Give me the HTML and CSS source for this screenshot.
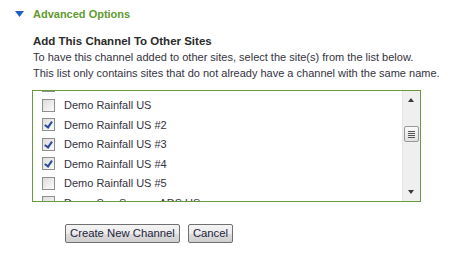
FILE: index.html
```html
<!DOCTYPE html>
<html>
<head>
<meta charset="utf-8">
<link rel="stylesheet" href="styles.css">
</head>
<body>
<div class="panel">
  <div class="toggle">
    <svg class="tri" width="9" height="6" viewBox="0 0 9 6"><path d="M0 0H9L4.5 6Z" fill="#1f5fbf"/></svg>
    <span class="toggle-label">Advanced Options</span>
  </div>
  <div class="section">
    <h3 class="title">Add This Channel To Other Sites</h3>
    <p class="desc">To have this channel added to other sites, select the site(s) from the list below.<br>This list only contains sites that do not already have a channel with the same name.</p>
    <div class="listbox">
      <div class="items">
        <div class="items-inner">
          <label class="row"><span class="cb"></span><span>Demo Previous Site</span></label>
          <label class="row"><span class="cb"></span><span>Demo Rainfall US</span></label>
          <label class="row"><span class="cb on"></span><span>Demo Rainfall US #2</span></label>
          <label class="row"><span class="cb on"></span><span>Demo Rainfall US #3</span></label>
          <label class="row"><span class="cb on"></span><span>Demo Rainfall US #4</span></label>
          <label class="row"><span class="cb"></span><span>Demo Rainfall US #5</span></label>
          <label class="row"><span class="cb"></span><span>Demo San Sewer - ADS US</span></label>
        </div>
      </div>
      <div class="sbar">
        <div class="arrow up"></div>
        <div class="track">
          <div class="thumb"><i></i><i></i><i></i><i></i></div>
        </div>
        <div class="arrow down"></div>
      </div>
    </div>
    <div class="actions">
      <button class="btn">Create New Channel</button>
      <button class="btn">Cancel</button>
    </div>
  </div>
</div>
</body>
</html>
```
FILE: styles.css
```css
html, body {
  margin: 0;
  padding: 0;
  background: #fff;
}
body {
  font-family: "Liberation Sans", Arial, sans-serif;
  font-size: 11px;
  color: #333340;
}
.panel {
  padding: 6px 0 0 15px;
}
.toggle {
  display: flex;
  align-items: center;
  height: 16px;
}
.tri {
  display: block;
  margin-right: 9px;
}
.toggle-label {
  color: #5f9a2e;
  font-weight: bold;
  font-size: 11px;
}
.section {
  padding-left: 18px;
}
.title {
  margin: 12px 0 0 0;
  font-size: 11.5px;
  font-weight: bold;
  line-height: 15px;
  color: #2b2b2b;
}
.desc {
  margin: 0;
  line-height: 16px;
  color: #333340;
  white-space: nowrap;
}
.listbox {
  margin-top: 9px;
  width: 387px;
  height: 110px;
  border: 1px solid #6a9a3c;
  display: flex;
  box-sizing: content-box;
  margin-left: -1px;
}
.items {
  flex: 1;
  overflow: hidden;
}
.items-inner {
  margin-top: -15px;
  padding-left: 9px;
}
.row {
  display: flex;
  align-items: center;
  height: 19.5px;
  gap: 9px;
  color: #333340;
}
.cb {
  width: 11px;
  height: 11px;
  border: 1px solid #8e8f8f;
  background: linear-gradient(135deg, #dcdcdc, #fbfbfb);
  position: relative;
  flex: none;
}
.cb.on::after {
  content: "";
  position: absolute;
  left: 3px;
  top: 1px;
  width: 3px;
  height: 6px;
  border: solid #2a4a9a;
  border-width: 0 2px 2px 0;
  transform: rotate(35deg);
}
.sbar {
  width: 17px;
  display: flex;
  flex-direction: column;
  background: #efefef;
  border-left: 1px solid #e6e6e6;
}
.arrow {
  height: 17px;
  position: relative;
}
.arrow::after {
  content: "";
  position: absolute;
  left: 5px;
  width: 0;
  height: 0;
  border-left: 3.5px solid transparent;
  border-right: 3.5px solid transparent;
}
.arrow.up::after {
  top: 7px;
  border-bottom: 4px solid #3a3a3a;
}
.arrow.down::after {
  top: 6px;
  border-top: 4px solid #3a3a3a;
}
.track {
  flex: 1;
  position: relative;
}
.thumb {
  margin: 18px 1px 0 1px;
  height: 14px;
  border: 1px solid #999;
  border-radius: 2px;
  background: linear-gradient(#fafafa, #e0e0e0);
  display: flex;
  flex-direction: column;
  align-items: center;
  justify-content: center;
  gap: 1px;
}
.thumb i {
  display: block;
  width: 7px;
  height: 1px;
  background: #555;
}
.actions {
  display: flex;
  gap: 8px;
  margin-top: 22px;
  padding-left: 32px;
}
.btn {
  font-family: "Liberation Sans", Arial, sans-serif;
  font-size: 11.3px;
  color: #22223a;
  height: 19px;
  padding: 0 4px;
  border: 1px solid #707070;
  border-radius: 2px;
  background: linear-gradient(#f4f4f4 0%, #ebebeb 50%, #dcdcdc 51%, #cfcfcf 100%);
  line-height: 17px;
}
```
